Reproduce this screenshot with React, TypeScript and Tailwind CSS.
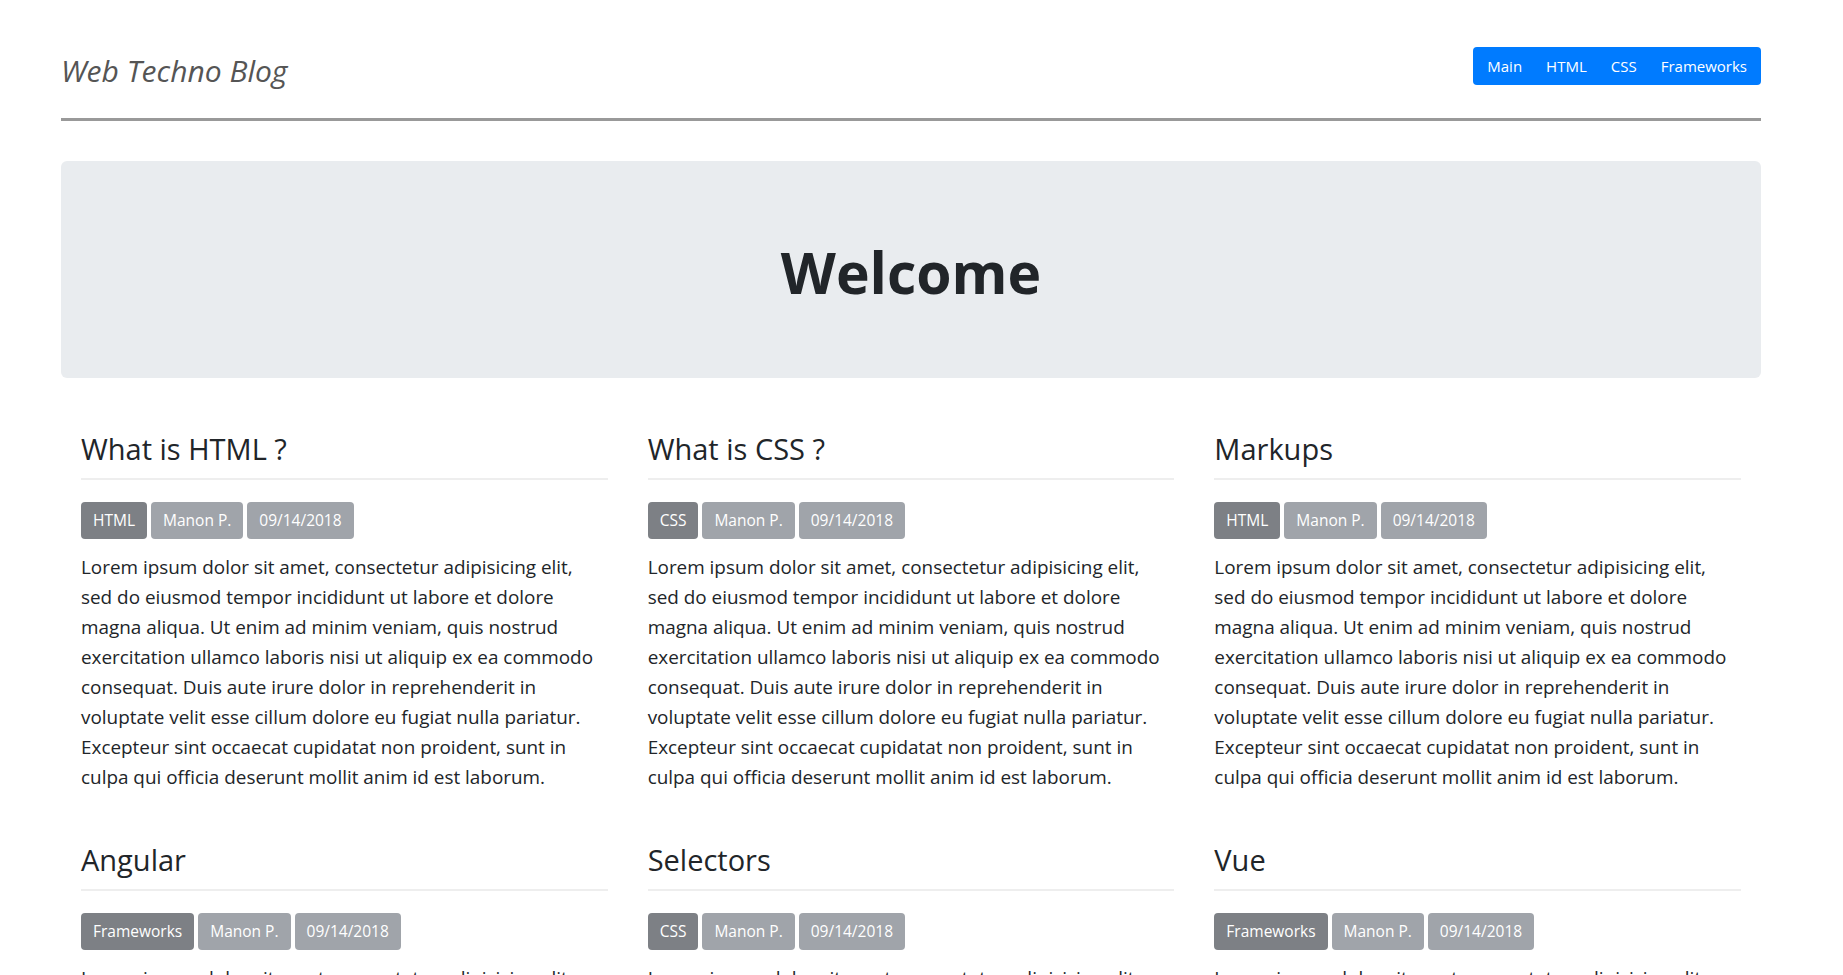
const loremLines = [
  "Lorem ipsum dolor sit amet, consectetur adipisicing elit,",
  "sed do eiusmod tempor incididunt ut labore et dolore",
  "magna aliqua. Ut enim ad minim veniam, quis nostrud",
  "exercitation ullamco laboris nisi ut aliquip ex ea commodo",
  "consequat. Duis aute irure dolor in reprehenderit in",
  "voluptate velit esse cillum dolore eu fugiat nulla pariatur.",
  "Excepteur sint occaecat cupidatat non proident, sunt in",
  "culpa qui officia deserunt mollit anim id est laborum.",
];

const posts = [
  { title: "What is HTML ?", tag: "HTML" },
  { title: "What is CSS ?", tag: "CSS" },
  { title: "Markups", tag: "HTML" },
  { title: "Angular", tag: "Frameworks" },
  { title: "Selectors", tag: "CSS" },
  { title: "Vue", tag: "Frameworks" },
];

const navItems = ["Main", "HTML", "CSS", "Frameworks"];

function Post({ title, tag }: { title: string; tag: string }) {
  return (
    <article className="px-5">
      <h3 className="text-[29px] leading-[40px] pb-[9px] border-b-2 border-[#eeeeee]">{title}</h3>
      <div className="mt-[22px] flex gap-[4px] text-[15.5px] text-white">
        <span className="h-[37px] px-[12px] flex items-center rounded bg-[#7d8085]">{tag}</span>
        <span className="h-[37px] px-[12px] flex items-center rounded bg-[#a0a4aa]">Manon P.</span>
        <span className="h-[37px] px-[12px] flex items-center rounded bg-[#a0a4aa]">09/14/2018</span>
      </div>
      <p className="mt-[13px] text-[18.9px] leading-[30px]">
        {loremLines.map((line) => (
          <span key={line} className="block whitespace-nowrap">
            {line}
          </span>
        ))}
      </p>
    </article>
  );
}

export default function App() {
  return (
    <div className="min-h-screen bg-white font-['Open_Sans',sans-serif] text-[#212529]">
      <div className="w-[1700px] ml-[61px]">
        {/* Header */}
        <header className="h-[118px] flex justify-between items-start">
          <h1 className="mt-[51px] text-[30px] leading-[40px] italic text-[#555555]">Web Techno Blog</h1>
          <nav className="mt-[47px] h-[38px] px-[2px] flex items-center rounded bg-[#007bff] text-[15px] text-white">
            {navItems.map((item) => (
              <a key={item} href="#" className="px-3">
                {item}
              </a>
            ))}
          </nav>
        </header>
        <div className="h-[3px] bg-[#999999]" />

        {/* Jumbotron */}
        <section className="mt-10 h-[217px] rounded-md bg-[#e9ecef] flex items-center justify-center pt-[6px]">
          <h2 className="text-[57px] font-bold leading-none">Welcome</h2>
        </section>

        {/* Posts */}
        <main className="grid grid-cols-3 pt-[51px] gap-y-[48px] pb-10">
          {posts.map((p) => (
            <Post key={p.title} title={p.title} tag={p.tag} />
          ))}
        </main>
      </div>
    </div>
  );
}
